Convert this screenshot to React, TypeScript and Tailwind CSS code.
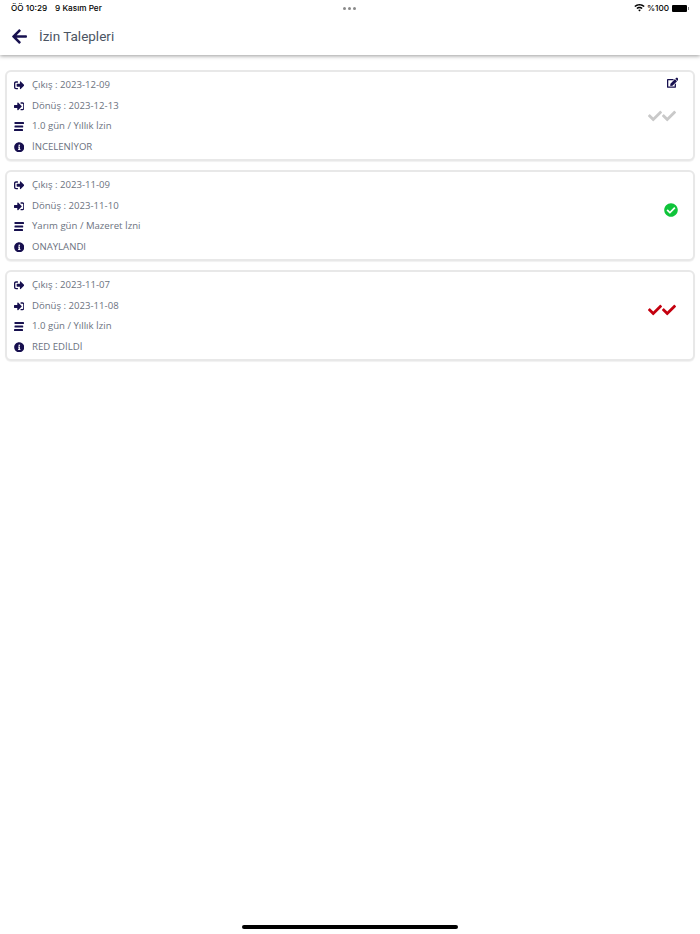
import React from "react";
import {
  FaArrowLeft,
  FaCheck,
  FaCheckCircle,
  FaEdit,
  FaInfoCircle,
  FaSignInAlt,
  FaSignOutAlt,
} from "react-icons/fa";

type Status = "pending" | "approved" | "rejected";

const requests: { out: string; back: string; kind: string; label: string; status: Status }[] = [
  { out: "2023-12-09", back: "2023-12-13", kind: "1.0 gün / Yıllık İzin", label: "İNCELENİYOR", status: "pending" },
  { out: "2023-11-09", back: "2023-11-10", kind: "Yarım gün / Mazeret İzni", label: "ONAYLANDI", status: "approved" },
  { out: "2023-11-07", back: "2023-11-08", kind: "1.0 gün / Yıllık İzin", label: "RED EDİLDİ", status: "rejected" },
];

const Row = ({ icon, text }: { icon: React.ReactNode; text: string }) => (
  <div className="flex h-[20.5px] items-center">
    <span className="mr-px flex w-6 justify-center text-[#17104f]">{icon}</span>
    <span className="text-[9.6px] text-[#6b7280]">{text}</span>
  </div>
);

const BarsIcon = () => (
  <svg width="10" height="9" viewBox="0 0 10 9" fill="currentColor">
    <rect x="0.5" y="0" width="9.5" height="2" rx="0.6" />
    <rect x="0.5" y="3.5" width="8.7" height="2" rx="0.6" />
    <rect x="0" y="7" width="9" height="2" rx="0.6" />
  </svg>
);

const DoubleCheck = ({ color }: { color: string }) => (
  <div className={`mr-[2px] flex ${color}`}>
    <FaCheck size={14} />
    <FaCheck size={14} />
  </div>
);

const RequestCard = ({ out, back, kind, label, status }: (typeof requests)[number]) => (
  <div className="relative flex h-[91px] items-center justify-between rounded-md border-2 border-[#e8e8e8] bg-white pr-[15px] pt-px shadow-[0_1px_1px_rgba(0,0,0,0.06)]">
    <div className="flex flex-col">
      <Row icon={<FaSignOutAlt size={10.5} />} text={`Çıkış : ${out}`} />
      <Row icon={<FaSignInAlt size={10.5} />} text={`Dönüş : ${back}`} />
      <Row icon={<BarsIcon />} text={kind} />
      <Row icon={<FaInfoCircle size={10.5} />} text={label} />
    </div>
    {status === "pending" && <DoubleCheck color="text-[#c9c9c9]" />}
    {status === "approved" && <FaCheckCircle size={14} className="mb-[12px] text-[#0fc43a]" />}
    {status === "rejected" && (
      <div className="mb-[12px]">
        <DoubleCheck color="text-[#c4000f]" />
      </div>
    )}
    {status === "pending" && (
      <FaEdit size={11.5} className="absolute right-[15px] top-[5px] text-[#17104f]" />
    )}
  </div>
);

export default function App() {
  return (
    <div className="flex h-[934px] flex-col bg-white font-['Open_Sans',sans-serif]">
      <header className="relative z-10 bg-white shadow-[0_1px_4px_rgba(0,0,0,0.4)]">
        <div className="relative flex h-4 items-center justify-between px-[11px] pt-[1px] font-['Inter',sans-serif] text-[8.2px] font-medium text-black">
          <div className="flex gap-2">
            <span>ÖÖ 10:29</span>
            <span>9 Kasım Per</span>
          </div>
          <div className="absolute left-[343px] top-[7px] flex gap-[2px]">
            <span className="h-[3px] w-[3px] rounded-full bg-[#8a8a8a]" />
            <span className="h-[3px] w-[3px] rounded-full bg-[#8a8a8a]" />
            <span className="h-[3px] w-[3px] rounded-full bg-[#8a8a8a]" />
          </div>
          <div className="flex items-center gap-[2px]">
            <svg width="11" height="8" viewBox="0 0 11 8" fill="black">
              <path d="M5.5 0C3.5 0 1.7.8.3 2.1l1 1C2.4 2 3.9 1.4 5.5 1.4s3.1.6 4.2 1.7l1-1C9.3.8 7.5 0 5.5 0z" />
              <path d="M5.5 2.8c-1.2 0-2.3.5-3.1 1.2l1 1c.6-.5 1.3-.8 2.1-.8s1.5.3 2.1.8l1-1c-.8-.7-1.9-1.2-3.1-1.2z" />
              <path d="M5.5 5.4c-.5 0-1 .2-1.3.5l1.3 1.5 1.3-1.5c-.3-.3-.8-.5-1.3-.5z" />
            </svg>
            <span>%100</span>
            <div className="ml-px flex items-center gap-px">
              <div className="h-[7px] w-[15px] rounded-[1px] bg-black" />
              <div className="h-[3px] w-px bg-[#888]" />
            </div>
          </div>
        </div>
        <div className="flex h-[39px] items-center pl-[11px] pt-px">
          <FaArrowLeft size={17} className="text-[#17104f]" />
          <span className="ml-[11px] font-['Roboto',sans-serif] text-[13.5px] text-[#4b5563]">İzin Talepleri</span>
        </div>
      </header>
      <main className="flex flex-col gap-[9px] px-[5px] pt-[15px]">
        {requests.map((r) => (
          <RequestCard key={r.out} {...r} />
        ))}
      </main>
      <div className="mt-auto flex justify-center pb-[5px]">
        <div className="h-1 w-[216px] rounded-full bg-black" />
      </div>
    </div>
  );
}
